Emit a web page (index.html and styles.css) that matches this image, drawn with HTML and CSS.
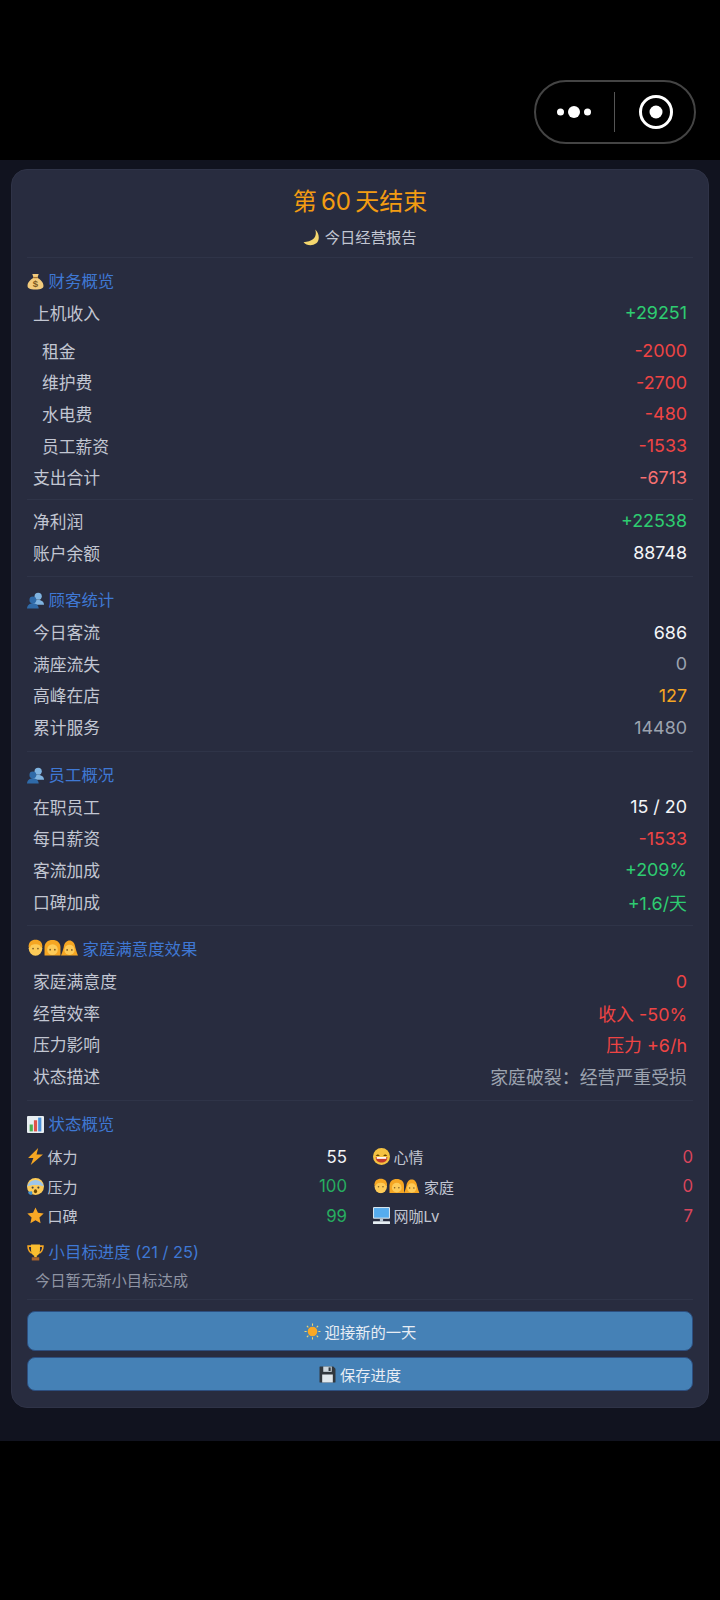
FILE: index.html
```html
<!DOCTYPE html>
<html>
<head>
<meta charset='utf-8'>
<title>第 60 天结束</title>
<link rel="stylesheet" href="styles.css">
</head>
<body>

<svg class="defs" width="0" height="0">
	<symbol id="moon" viewBox="0 0 16 16"><path d="M11.500 .5c2 6-1 11.500-11 12 2.500 3 8 4 12 1 3.500-3 3-9.500-1-13z" fill="#f5d76e"/></symbol>
	<symbol id="people" viewBox="0 0 16 16"><circle cx="10.500" cy="4" r="3.400" fill="#7fb3e0"/><path d="M5 12c0-3 2.500-4.500 5.500-4.500S16 9 16 12z" fill="#7fb3e0"/><circle cx="5.500" cy="7.500" r="3.200" fill="#2f6aa8"/><path d="M0 15.500c0-3 2.500-5 5.500-5s5.500 2 5.500 5z" fill="#2f6aa8"/></symbol>
	<symbol id="man" viewBox="0 0 16 16"><ellipse cx="8" cy="8.800" rx="6.400" ry="7" fill="#fdcb58"/><path d="M1.500 7.500C1.500 3 4 .8 8 .8s6.500 2.200 6.500 6.700l-1.500.5c-.5-2-1.500-3-5-3s-4.500 1-5 3z" fill="#f5a623"/><circle cx="5.700" cy="9" r=".8" fill="#7c5a22"/><circle cx="10.300" cy="9" r=".8" fill="#7c5a22"/></symbol>
	<symbol id="woman" viewBox="0 0 16 16"><path d="M.5 15.500V8c0-4.500 3-7 7.500-7s7.500 2.500 7.500 7v7.500z" fill="#f5a623"/><ellipse cx="8" cy="10" rx="5" ry="5" fill="#fdcb58"/><circle cx="5.800" cy="10" r=".8" fill="#7c5a22"/><circle cx="10.200" cy="10" r=".8" fill="#7c5a22"/></symbol>
	<symbol id="girl" viewBox="0 0 16 16"><path d="M0 15.500c1-2 1.500-4 2.500-7.500C3 3.500 5.500 1.500 8 1.500s5 2 5.500 6.500c1 3.500 1.500 5.500 2.500 7.500z" fill="#f5a623"/><ellipse cx="8" cy="10.300" rx="4.800" ry="4.800" fill="#fdcb58"/><circle cx="5.800" cy="10.300" r=".8" fill="#7c5a22"/><circle cx="10.200" cy="10.300" r=".8" fill="#7c5a22"/></symbol>
	<symbol id="chart" viewBox="0 0 16 16"><rect width="16" height="16" rx="1" fill="#e8eef2"/><rect x="2.500" y="8" width="3" height="6.500" fill="#4caf50"/><rect x="6.500" y="4" width="3" height="10.500" fill="#e0524a"/><rect x="10.500" y="1.500" width="3" height="13" fill="#4a90d9"/></symbol>
	<symbol id="bolt" viewBox="0 0 16 16"><path d="M10.500 0 1 9.500h5L3.500 16 15 6H9z" fill="#f5a623"/></symbol>
	<symbol id="scared" viewBox="0 0 16 16"><circle cx="8" cy="8" r="8" fill="#fdcb58"/><path d="M.2 8a8 8 0 0 1 15.600 0C13 6 3 6 .2 8z" fill="#9fc6e8"/><path d="M1 13c0 2 2 3 3 3s1.500-2 .5-3.500z" fill="#3d8fd1"/><circle cx="5.300" cy="9" r="1" fill="#444"/><circle cx="10.700" cy="9" r="1" fill="#444"/><ellipse cx="8" cy="12.500" rx="1.500" ry="1.800" fill="#664500"/></symbol>
	<symbol id="star" viewBox="0 0 16 16"><path d="m8 .5 2.300 5 5.400.6-4 3.700 1.100 5.400L8 12.500l-4.800 2.700 1.100-5.400-4-3.700 5.400-.6z" fill="#f9a825"/></symbol>
	<symbol id="smile" viewBox="0 0 16 16"><circle cx="8" cy="8" r="8" fill="#f5c242"/><path d="M2.500 7.500c1-2 3-2 4 0zM9.500 7.500c1-2 3-2 4 0z" fill="#664500"/><path d="M2.500 8.500h11c0 3.500-2.500 5.200-5.500 5.200s-5.500-1.700-5.500-5.200z" fill="#c0392b"/><path d="M3.500 8.500h9v1.700h-9z" fill="#fff"/></symbol>
	<symbol id="monitor" viewBox="0 0 16 16"><rect width="16" height="11" rx="1" fill="#d5e4ee"/><rect x="1" y="1" width="14" height="9" fill="#55acee"/><rect x="6.500" y="11" width="3" height="2.500" fill="#b8c8d4"/><rect y="13.500" width="16" height="2.500" rx=".5" fill="#e6eef3"/></symbol>
	<symbol id="trophy" viewBox="0 0 16 16"><path d="M1 2h14c0 4-2 6.500-4 6.500H5C3 8.500 1 6 1 2z" fill="none" stroke="#f5a623" stroke-width="1.500"/><path d="M3.800 .5h8.400V6c0 3-2 4.500-3 5v1.500h-2.400V11c-1-.5-3-2-3-5z" fill="#f9bd30"/><rect x="4.500" y="12.500" width="7" height="3" fill="#a8622c"/></symbol>
	<symbol id="sun" viewBox="0 0 16 16"><circle cx="8" cy="8" r="4.500" fill="#f9a825"/><path d="M8 .5v2M8 13.500v2M.5 8h2M13.500 8h2M2.700 2.700l1.400 1.400M11.900 11.900l1.400 1.400M2.700 13.300l1.400-1.400M11.900 4.100l1.400-1.400" stroke="#f5d76e" stroke-width="1"/></symbol>
	<symbol id="disk" viewBox="0 0 16 16"><path d="M1 .5h12.500L15.500 2.500V15a.5.5 0 0 1-.5.5H1a.5.5 0 0 1-.5-.5V1A.5.5 0 0 1 1 .5z" fill="#31373d"/><rect x="3" y="8" width="10" height="7.500" fill="#e1e8ed"/><rect x="4" y=".5" width="8" height="5" fill="#ccd6dd"/><rect x="9" y="1.300" width="2" height="3.400" fill="#31373d"/></symbol>
</svg>

<div class="topbar">
	<div class="capsule">
		<svg class="cap-more" width="40" height="16" viewBox="0 0 40 16"><circle cx="6.500" cy="8" r="3.500"/><circle cx="20" cy="8" r="6"/><circle cx="33.500" cy="8" r="3.500"/></svg>
		<div class="cap-line"></div>
		<svg class="cap-ring" width="36" height="36" viewBox="0 0 36 36"><circle cx="18" cy="18" r="15.500" fill="none" stroke="#fff" stroke-width="3"/><circle cx="18" cy="18" r="6.500" fill="#fff"/></svg>
	</div>
</div>

<div class="page">
<div class="card">
	<div class="title">第 60 天结束</div>
	<div class="subtitle"><svg class="ic"><use href="#moon"/></svg> 今日经营报告</div>

	<div class="section first">
		<div class="sec-title"><svg class="ic" viewBox="0 0 16 16"><path d="M5 1h6L9.800 4.500c3 1.500 5.700 4.500 5.700 7.500 0 2.500-2 3.500-7.500 3.500S.5 14.500.5 12c0-3 2.700-6 5.700-7.500z" fill="#f3cb7c"/><path d="M6 4.300h4" stroke="#a8722c" stroke-width="1.200"/><text x="8" y="13.500" text-anchor="middle" font-size="9" font-family="Liberation Sans" font-weight="bold" fill="#7c5a22">$</text></svg> 财务概览</div>
		<div class="row gap"><span>上机收入</span><span class="green">+29251</span></div>
		<div class="row sub"><span>租金</span><span class="red">-2000</span></div>
		<div class="row sub"><span>维护费</span><span class="red">-2700</span></div>
		<div class="row sub"><span>水电费</span><span class="red">-480</span></div>
		<div class="row sub"><span>员工薪资</span><span class="red">-1533</span></div>
		<div class="row"><span>支出合计</span><span class="salmon">-6713</span></div>
		<div class="line"></div>
		<div class="row"><span>净利润</span><span class="green">+22538</span></div>
		<div class="row"><span>账户余额</span><span class="white">88748</span></div>
	</div>

	<div class="section">
		<div class="sec-title"><svg class="ic"><use href="#people"/></svg> 顾客统计</div>
		<div class="row"><span>今日客流</span><span class="white">686</span></div>
		<div class="row"><span>满座流失</span><span class="gray">0</span></div>
		<div class="row"><span>高峰在店</span><span class="orange">127</span></div>
		<div class="row"><span>累计服务</span><span class="gray">14480</span></div>
	</div>

	<div class="section">
		<div class="sec-title"><svg class="ic"><use href="#people"/></svg> 员工概况</div>
		<div class="row"><span>在职员工</span><span class="white">15 / 20</span></div>
		<div class="row"><span>每日薪资</span><span class="red">-1533</span></div>
		<div class="row"><span>客流加成</span><span class="green">+209%</span></div>
		<div class="row"><span>口碑加成</span><span class="green">+1.6/天</span></div>
	</div>

	<div class="section">
		<div class="sec-title"><span class="fam"><svg class="ic"><use href="#man"/></svg><svg class="ic"><use href="#woman"/></svg><svg class="ic"><use href="#girl"/></svg></span> 家庭满意度效果</div>
		<div class="row"><span>家庭满意度</span><span class="red">0</span></div>
		<div class="row"><span>经营效率</span><span class="red">收入 -50%</span></div>
		<div class="row"><span>压力影响</span><span class="red">压力 +6/h</span></div>
		<div class="row"><span>状态描述</span><span class="gray">家庭破裂：经营严重受损</span></div>
	</div>

	<div class="section">
		<div class="sec-title"><svg class="ic"><use href="#chart"/></svg> 状态概览</div>
		<div class="stats">
			<div class="stat"><span class="lbl"><svg class="ic"><use href="#bolt"/></svg>体力</span><span class="white">55</span></div>
			<div class="stat"><span class="lbl"><svg class="ic"><use href="#smile"/></svg>心情</span><span class="dimred">0</span></div>
			<div class="stat"><span class="lbl"><svg class="ic"><use href="#scared"/></svg>压力</span><span class="dimgreen">100</span></div>
			<div class="stat"><span class="lbl"><span class="fam"><svg class="ic"><use href="#man"/></svg><svg class="ic"><use href="#woman"/></svg><svg class="ic"><use href="#girl"/></svg></span>家庭</span><span class="dimred">0</span></div>
			<div class="stat"><span class="lbl"><svg class="ic"><use href="#star"/></svg>口碑</span><span class="dimgreen">99</span></div>
			<div class="stat"><span class="lbl"><svg class="ic"><use href="#monitor"/></svg>网咖Lv</span><span class="dimred">7</span></div>
		</div>
		<div class="sec-title goal"><svg class="ic"><use href="#trophy"/></svg> 小目标进度 (21 / 25)</div>
		<div class="goal-text">今日暂无新小目标达成</div>
	</div>

	<div class="btns">
		<div class="btn big"><svg class="ic"><use href="#sun"/></svg> 迎接新的一天</div>
		<div class="btn"><svg class="ic"><use href="#disk"/></svg> 保存进度</div>
	</div>
</div>
</div>

</body>
</html>
```

FILE: styles.css
```css
body, html {
	margin: 0;
	background: #000;
	font-family: Inter, "Noto Sans CJK SC", sans-serif;
}

.defs {
	display: block;
	height: 0;
}

.topbar {
	height: 160px;
	display: flex;
	justify-content: flex-end;
	align-items: flex-start;
	padding: 80px 24px 0 0;
	box-sizing: border-box;
}

.capsule {
	width: 162px;
	height: 64px;
	box-sizing: border-box;
	border: 2px solid #444;
	border-radius: 32px;
	display: flex;
	align-items: center;
	padding-left: 18px;
}

.cap-more {
	fill: #fff;
}

.cap-line {
	width: 1px;
	height: 40px;
	background: #555;
	margin: 0 23px 0 20px;
}

.page {
	background: #11131f;
	padding: 9px 11px 33px;
}

.card {
	background: #282c3f;
	border: 1px solid #2f3347;
	border-radius: 16px;
	padding: 14px 15px 16px;
	color: #c2c6d2;
}

.title {
	text-align: center;
	font-size: 24px;
	line-height: 36px;
	color: #f39c12;
	word-spacing: -2.500px;
}

.subtitle {
	text-align: center;
	font-size: 15.300px;
	line-height: 24px;
	margin-top: 6px;
}

.ic {
	width: 17px;
	height: 17px;
	vertical-align: -3px;
}

.fam {
	display: inline-flex;
	vertical-align: -1px;
}

.section {
	border-top: 1px solid #2f3448;
	padding-top: 11px;
	margin-top: 6.750px;
	padding-bottom: 1px;
}

.section.first {
	margin-top: 7px;
	padding-top: 11px;
}

.sec-title {
	color: #3f78d4;
	font-size: 16.400px;
	line-height: 24px;
	margin-bottom: 4px;
}

.row {
	display: flex;
	justify-content: space-between;
	align-items: center;
	height: 31.700px;
	padding: 0 6px;
	font-size: 16.800px;
}

.row span:last-child {
	font-size: 17.900px;
}

.row.gap {
	margin-bottom: 6px;
}

.row.sub {
	padding-left: 15px;
}

.line {
	border-top: 1px solid #2f3448;
	margin: 6px 0 5px;
}

.green { color: #2ecc71; }
.red { color: #ef4444; }
.salmon { color: #f87171; }
.orange { color: #f5a623; }
.white { color: #f4f5f7; }
.gray { color: #9ca3af; }
.dimred { color: #d9455c; }
.dimgreen { color: #27ae60; }

.stats {
	display: grid;
	grid-template-columns: 1fr 1fr;
	column-gap: 26px;
	margin-top: 6px;
}

.stat {
	display: flex;
	justify-content: space-between;
	align-items: center;
	height: 29.500px;
	font-size: 16.800px;
}

.lbl {
	display: flex;
	align-items: center;
	gap: 3.500px;
	font-size: 15px;
}

.lbl .ic {
	display: block;
}

.lbl .fam {
	margin-right: 1px;
}

.lbl .fam .ic {
	width: 15.500px;
	height: 15.500px;
}

.goal {
	margin-top: 10px;
}

.goal-text {
	font-size: 15.300px;
	line-height: 24px;
	color: #8f94a3;
	padding: 1px 8px 5px;
}

.btns {
	border-top: 1px solid #2f3448;
	padding-top: 11px;
	display: flex;
	flex-direction: column;
	gap: 6px;
}

.btn {
	height: 34px;
	background: #4581b6;
	border: 1px solid #2d4f80;
	border-radius: 8px;
	color: #e8edf4;
	font-size: 15.300px;
	display: flex;
	align-items: center;
	justify-content: center;
	gap: 4px;
	box-sizing: border-box;
}

.btn.big {
	height: 40px;
}
```
